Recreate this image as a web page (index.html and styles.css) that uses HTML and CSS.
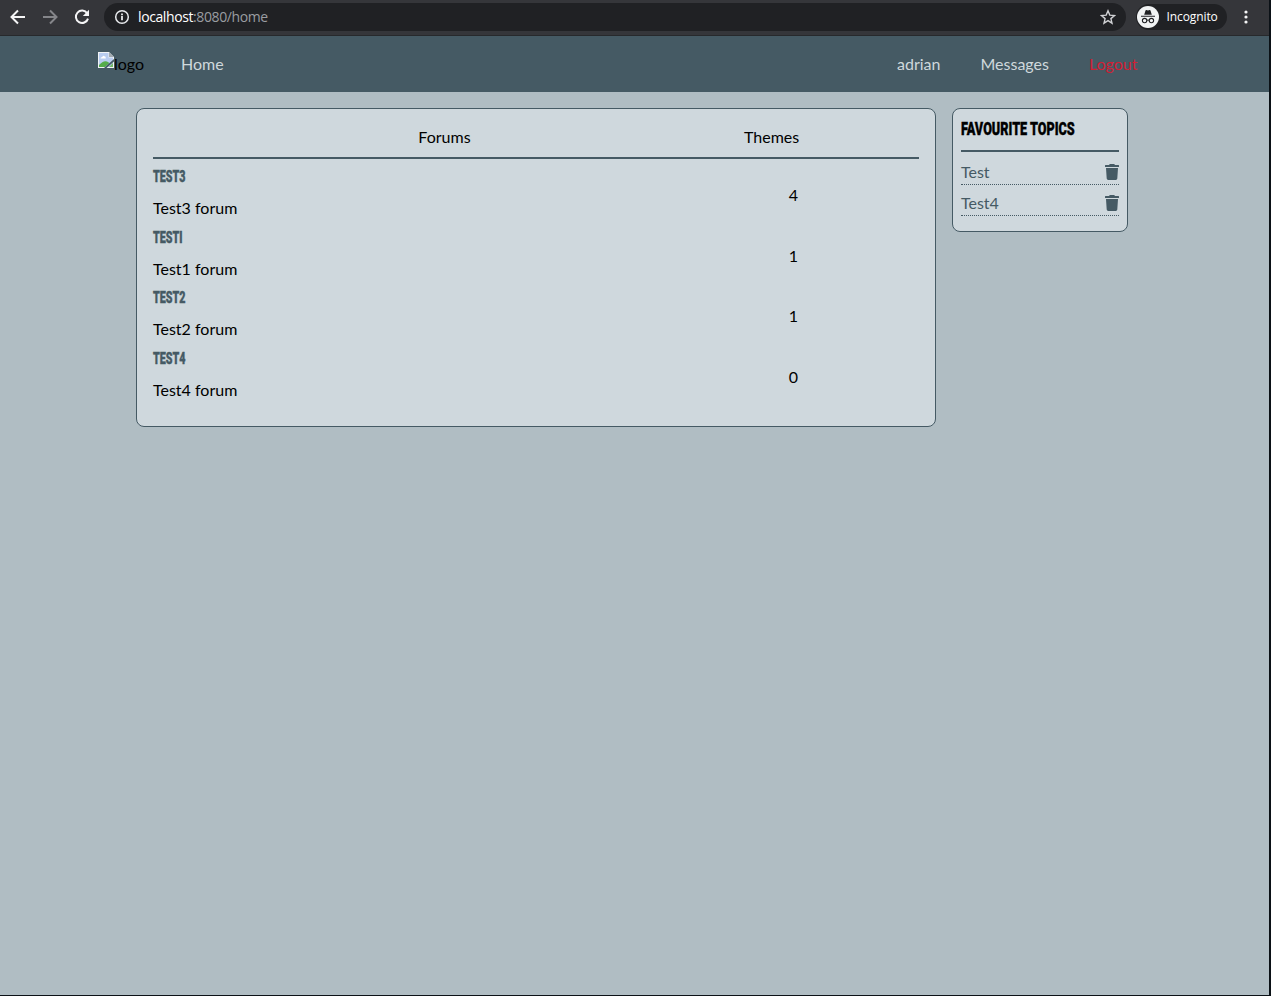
FILE: index.html
```html
<!DOCTYPE html>
<html lang="en">
<head>
<meta charset="utf-8">
<title>Forum home</title>
<link rel="stylesheet" href="styles.css">
</head>
<body>
<div class="window">
  <header class="toolbar">
    <svg class="tool" viewBox="0 0 16 16"><path d="M15 8H2M8 1.500 1.500 8 8 14.500" fill="none" stroke="#f5f5f6" stroke-width="2"/></svg>
    <svg class="tool" viewBox="0 0 16 16"><path d="M1 8h13M8 1.500 14.500 8 8 14.500" fill="none" stroke="#85868a" stroke-width="2"/></svg>
    <svg class="tool" viewBox="0 0 16 16"><path d="M13.200 4.300A6.200 6.200 0 1 0 14 9.600" fill="none" stroke="#f5f5f6" stroke-width="2"/><path d="M15 .8V7H8.800z" fill="#f5f5f6"/></svg>
    <div class="address">
      <svg class="info" viewBox="0 0 16 16"><circle cx="8" cy="8" r="6.3" fill="none" stroke="#e8eaed" stroke-width="1.5"/><path d="M7.100 7.100h1.800v4.200H7.100zM7.100 4.500h1.800v1.700H7.100z" fill="#e8eaed"/></svg>
      <span class="url"><b>localhost</b>:8080/home</span>
      <svg class="star" viewBox="0 0 16 16"><path d="m8 1.800 1.800 4.300 4.700.4-3.600 3.100 1.100 4.600L8 11.700l-4 2.500 1.100-4.600-3.600-3.100 4.700-.4z" fill="none" stroke="#d0d1d4" stroke-width="1.4"/></svg>
    </div>
    <div class="incognito">
      <svg class="spy" viewBox="0 0 22 22"><circle cx="11" cy="11" r="11" fill="#f1f3f4"/><path d="M7.200 8.800 8.500 4.500q.2-.6.9-.4l1.600.4 1.600-.4q.7-.2.9.4l1.300 4.300zM4 9.700h14v1.100H4z" fill="#202124"/><g fill="none" stroke="#202124" stroke-width="1.1"><circle cx="7.6" cy="14.6" r="2.2"/><circle cx="14.4" cy="14.6" r="2.2"/><path d="M9.800 14.400q1.200-.8 2.400 0"/></g></svg>
      <span>Incognito</span>
    </div>
    <svg class="more" viewBox="0 0 4 16"><g fill="#f5f5f6"><circle cx="2" cy="3" r="1.6"/><circle cx="2" cy="8" r="1.6"/><circle cx="2" cy="13" r="1.6"/></g></svg>
  </header>
  <nav class="navbar">
    <a class="logo"><svg class="broken" viewBox="0 0 16 16"><path d="M0 0h11l5 5v11H0z" fill="#f0f3f5"/><path d="M1 1h9.500v4.500H15V15H1z" fill="#b9cdf0"/><path d="M2.500 6.500q0-1.600 1.800-1.600Q5 3.200 6.500 4.200q1.500 0 1.300 2.300z" fill="#fff"/><path d="M1 15v-2q4.500-5 8-3.500L11.500 11 7 15z" fill="#55ad4b"/><path d="M11 0v5h5z" fill="#a2aaaf"/><path d="M16 7v2.500L8.500 16H6z" fill="#455a64"/><path d="M15 11v4h-4z" fill="#71b865"/></svg><span>logo</span></a>
    <a class="home">Home</a>
    <div class="account"><a>adrian</a><a>Messages</a><a class="logout">Logout</a></div>
  </nav>
  <main class="content">
    <section class="card forums">
      <div class="row head"><span class="title">Forums</span><span class="themes">Themes</span></div>
      <div class="row"><div><h3><span>TEST3</span></h3><p>Test3 forum</p></div><span class="count">4</span></div>
      <div class="row"><div><h3><span>TESTI</span></h3><p>Test1 forum</p></div><span class="count">1</span></div>
      <div class="row"><div><h3><span>TEST2</span></h3><p>Test2 forum</p></div><span class="count">1</span></div>
      <div class="row"><div><h3><span>TEST4</span></h3><p>Test4 forum</p></div><span class="count">0</span></div>
    </section>
    <aside class="card topics">
      <h2><span>FAVOURITE TOPICS</span></h2>
      <div class="topic"><a>Test</a><svg class="trash" viewBox="0 0 14 16"><path d="M.5 1H4l.8-1h4.400l.8 1h3.500q.5 0 .5.500V3H0V1.500Q0 1 .5 1zM1 4h12l-.7 10.600q-.1 1.400-1.500 1.400H3.200q-1.400 0-1.500-1.400z" fill="#455a64"/></svg></div>
      <div class="topic"><a>Test4</a><svg class="trash" viewBox="0 0 14 16"><path d="M.5 1H4l.8-1h4.400l.8 1h3.500q.5 0 .5.500V3H0V1.500Q0 1 .5 1zM1 4h12l-.7 10.600q-.1 1.400-1.500 1.400H3.200q-1.400 0-1.500-1.400z" fill="#455a64"/></svg></div>
    </aside>
  </main>
</div>
</body>
</html>
```
FILE: styles.css
```css
* { box-sizing: border-box; }
body { margin: 0; background: #0b1116; font: 16px/24px Lato, sans-serif; color: #000; }
svg { display: block; flex: none; }
h2, h3, p { margin: 0; }
.window { width: 1268.5px; height: 995px; background: #b0bdc3; }

.toolbar { display: flex; align-items: center; height: 36px; padding: 0 21px 2px 10px; background: #35363a; border-bottom: 1px solid #27292c; }
.tool { width: 16px; height: 16px; margin-right: 16px; }
.address { display: flex; align-items: center; width: 1022px; height: 28px; margin-left: -2px; padding: 0 10px; border-radius: 14px; background: #202124; }
.info { width: 16px; height: 16px; margin-right: 8px; }
.url { flex: 1; font: 14px/20px "Open Sans", sans-serif; letter-spacing: -0.4px; color: #9a9da1; }
.url b { font-weight: 400; color: #fff; }
.star { width: 16px; height: 16px; }
.incognito { display: flex; align-items: center; gap: 8px; width: 91px; height: 26px; margin-left: 10px; padding-left: 1px; border-radius: 13px; background: #202124; color: #fff; font: 12px/16px "Open Sans", sans-serif; letter-spacing: -0.1px; }
.spy { width: 22px; height: 22px; }
.more { width: 4px; height: 16px; margin-left: 17px; }

.navbar { display: flex; align-items: center; height: 56px; padding: 0 131px 0 98px; background: #455a64; color: #cfd8dc; }
.logo { display: flex; width: 83px; color: #000; }
.broken { width: 16px; height: 16px; }
.account { display: flex; gap: 40px; margin-left: auto; }
.logout { color: #d01f35; }

.content { display: flex; align-items: flex-start; gap: 16px; padding: 16px 0 0 136px; }
.card { border: 1px solid #455a64; border-radius: 8px; background: #cfd8dd; }
.forums { width: 800px; height: 319px; padding: 16px; }
.row { display: grid; grid-template-columns: 583px 115px; height: 60.7px; align-items: center; }
.head { height: 34px; margin-bottom: 6px; padding-bottom: 8px; border-bottom: 2px solid #455a64; }
.title, .count { text-align: center; }
.count { padding-bottom: 1px; }
.themes { padding-left: 8px; }
.row h3 { height: 24px; color: #455a64; font: 900 16.5px/24px Roboto, sans-serif; }
.row p { padding-top: 7px; height: 37px; }
.row h3 span, .topics h2 span { display: inline-block; transform-origin: left; transform: scaleX(.65); -webkit-text-stroke: .4px; }

.topics { width: 176px; height: 124px; padding: 8px; }
.topics h2 { height: 35px; margin-bottom: 8px; border-bottom: 2px solid #455a64; font: 900 19px/24px Roboto, sans-serif; white-space: nowrap; }
.topics h2 span { transform: scaleX(.665); }
.topic { display: flex; justify-content: space-between; height: 25px; margin-bottom: 6px; border-bottom: 1px dotted #455a64; color: #455a64; }
.trash { width: 14px; height: 16px; margin-top: 4px; }
```
